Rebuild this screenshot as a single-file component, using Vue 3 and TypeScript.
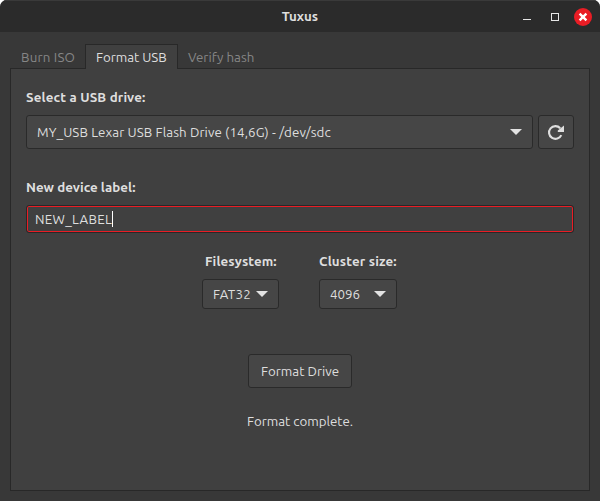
<script setup lang="ts">
import { ref } from 'vue'

const tabs = ['Burn ISO', 'Format USB', 'Verify hash']
const active = ref(1)
const drive = 'MY_USB Lexar USB Flash Drive (14,6G) - /dev/sdc'
const label = 'NEW_LABEL'
</script>

<template>
  <div class="window">
    <header class="titlebar">
      <h1 class="title">Tuxus</h1>
      <div class="controls">
        <svg width="80" height="20" viewBox="0 0 80 20">
          <path d="M4 12.5h8" stroke="#e6e6e6" />
          <rect x="32.5" y="6.5" width="7" height="7" fill="none" stroke="#e6e6e6" />
          <circle cx="64" cy="10" r="9" fill="#e91d25" />
          <path d="M60.6 6.6l6.8 6.8M67.4 6.6l-6.8 6.8" stroke="#fff" stroke-width="2.4" />
        </svg>
      </div>
    </header>
    <main class="body">
      <nav class="tabs">
        <button
          v-for="(tab, i) in tabs"
          :key="tab"
          class="tab"
          :class="['tab-' + i, { active: i === active }]"
          @click="active = i"
        ><span>{{ tab }}</span></button>
      </nav>
      <section class="panel">
        <div class="heading drive-heading"><span>Select a USB drive:</span></div>
        <div class="drive-row">
          <button class="btn combo drive">
            <span class="drive-text">{{ drive }}</span>
            <svg width="12" height="6" viewBox="0 0 12 6"><path d="M0 0h12L6 6z" fill="#e2e2e2" /></svg>
          </button>
          <button class="btn refresh">
            <svg width="18" height="18" viewBox="0 0 18 18">
              <path d="M14.3 12.1A6.4 6.4 0 1 1 13.2 5.2" fill="none" stroke="#dedede" stroke-width="2.1" />
              <path d="M17 2.6V9h-6.2V7.4z" fill="#dedede" />
            </svg>
          </button>
        </div>
        <div class="heading label-heading"><span>New device label:</span></div>
        <div class="entry"><span class="entry-text">{{ label }}</span><i class="caret"></i></div>
        <div class="options">
          <div class="option fs">
            <div class="heading fs-heading"><span>Filesystem:</span></div>
            <button class="btn combo small">
              <span class="fs-text">FAT32</span>
              <svg width="12" height="6" viewBox="0 0 12 6"><path d="M0 0h12L6 6z" fill="#e2e2e2" /></svg>
            </button>
          </div>
          <div class="option cluster">
            <div class="heading cluster-heading"><span>Cluster size:</span></div>
            <button class="btn combo small">
              <span class="cluster-text">4096</span>
              <svg width="12" height="6" viewBox="0 0 12 6"><path d="M0 0h12L6 6z" fill="#e2e2e2" /></svg>
            </button>
          </div>
        </div>
        <button class="btn format"><span>Format Drive</span></button>
        <div class="status"><span>Format complete.</span></div>
      </section>
    </main>
  </div>
</template>

<style>
body {
  background: #fff;
  overflow: hidden;
}
</style>

<style scoped>
* {
  box-sizing: border-box;
}
.window {
  width: 600px;
  height: 501px;
  display: flex;
  flex-direction: column;
  background: #383838;
  border-radius: 7px 7px 0 0;
  overflow: hidden;
  color: #dedede;
  font: 13.333px/18px 'Ubuntu', 'Noto Sans', sans-serif;
  white-space: nowrap;
}
.titlebar {
  height: 32px;
  flex: none;
  display: grid;
  grid-template-columns: 80px 1fr 80px;
  align-items: center;
  padding: 0 9px 0 9px;
  background: #2b2b2b;
  border-top: 1px solid #3a3a3a;
}
.title {
  grid-column: 2;
  margin: 0;
  text-align: center;
  font-size: 13.333px;
  line-height: 18px;
  font-weight: 700;
}
.controls {
  display: flex;
  justify-content: flex-end;
  margin-right: -8px;
}
svg {
  display: block;
  flex: none;
}
button {
  font: inherit;
  color: inherit;
  margin: 0;
  padding: 0;
}
button > span,
.entry-text {
  display: block;
  padding-top: 2px;
}
.body {
  flex: 1;
  display: flex;
  flex-direction: column;
  padding: 12px 10px 10px;
}
.tabs {
  display: flex;
  height: 25px;
  flex: none;
  position: relative;
}
.tab {
  height: 25px;
  padding: 0 0 0 11px;
  text-align: left;
  border: 0;
  background: none;
  color: #868686;
}
.tab-0 { width: 75px; letter-spacing: 0.2px; }
.tab-1 { width: 93px; letter-spacing: -0.05px; }
.tab-2 { width: 90px; padding-left: 10px; }
.tab.active {
  border: 1px solid #282828;
  border-bottom: 0;
  padding-left: 10px;
  background: #404040;
  color: #dedede;
}
.panel {
  flex: 1;
  display: flex;
  flex-direction: column;
  margin-top: -1px;
  padding: 19px 15px 0;
  border: 1px solid #282828;
  background: #404040;
}
.heading {
  font-weight: 700;
  height: 18px;
  line-height: 20px;
}
.drive-heading { letter-spacing: 0.15px; }
.cluster-heading { letter-spacing: 0.15px; }
.drive-text { letter-spacing: 0.1px; }
.entry-text { letter-spacing: 0.3px; }
.fs-text { letter-spacing: 0.2px; }
.btn {
  border: 1px solid #2a2a2a;
  border-radius: 3px;
  background: #464646;
}
.combo {
  display: flex;
  align-items: center;
  justify-content: space-between;
  padding: 0 10px;
}
.drive-row {
  display: flex;
  gap: 5px;
  margin-top: 9px;
}
.drive {
  width: 507px;
  height: 34px;
}
.refresh {
  width: 36px;
  height: 34px;
  display: grid;
  place-items: center;
}
.label-heading {
  margin-top: 29px;
}
.entry {
  display: flex;
  align-items: center;
  height: 28px;
  margin-top: 9px;
  padding-left: 8px;
  border: 1px solid #282828;
  border-radius: 3px;
  background: #404040;
  box-shadow: inset 0 0 0 1px #e91d25;
}
.caret {
  width: 1px;
  height: 16px;
  background: #fff;
}
.options {
  display: flex;
  gap: 40px;
  margin: 19px 0 0 176px;
}
.fs { width: 77px; }
.cluster { width: 78px; }
.fs-heading { padding-left: 3px; letter-spacing: 0.1px; }
.small {
  width: 100%;
  height: 30px;
  margin-top: 9px;
}
.format {
  width: 104px;
  height: 34px;
  margin-top: 45px;
  align-self: center;
}
.status {
  margin-top: 24px;
  line-height: 20px;
  text-align: center;
  letter-spacing: -0.03px;
}
</style>
